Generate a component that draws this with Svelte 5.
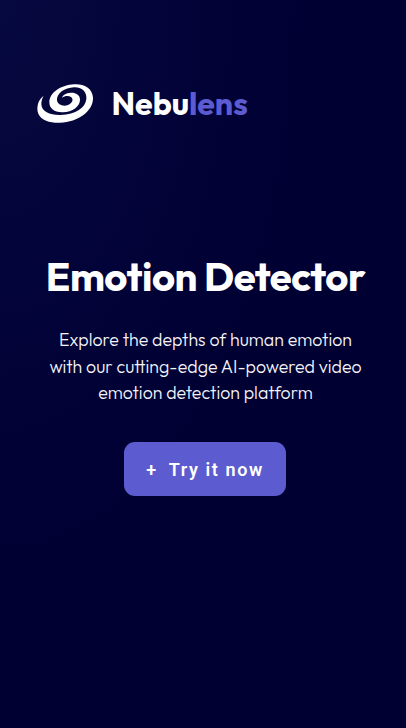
<script>
  const lines = [
    'Explore the depths of human emotion',
    'with our cutting-edge AI-powered video',
    'emotion detection platform',
  ];
</script>

<main>
  <header>
    <svg class="logo" viewBox="0 0 216 168" aria-hidden="true">
      <path fill="#fff" d="M41 62C24 74 18 98 25 116C34 137 62 144 90 143C145 141 190 108 189 68C187 38 160 26 132 28C95 30 58 52 58 82C58 101 74 113 98 112C128 111 150 94 150 74C150 58 136 52 122 53C108 54 98 60 96 68C104 62 116 61 123 66C132 73 127 85 114 90C100 95 83 90 81 76C79 56 104 38 132 37C158 36 171 52 169 72C166 99 138 118 92 120C60 121 35 110 34 88C34 78 37 69 41 62Z" />
    </svg>
    <div class="brand"><span>Nebu</span><span class="last">lens</span></div>
  </header>
  <section>
    <h1>Emotion Detector</h1>
    <p>
      {#each lines as line}
        <span>{line}</span>
      {/each}
    </p>
    <button><span class="plus">+</span>Try it now</button>
  </section>
</main>

<style>
  main {
    box-sizing: border-box;
    width: 100%;
    height: 728px;
    padding-top: 75px;
    overflow: hidden;
    color: #fff;
    background: radial-gradient(ellipse 300px 560px at 0 0, #06093f, #03043a 45%, #000033 100%);
    font-family: Outfit, Lato, sans-serif;
  }
  header { display: flex; align-items: center; height: 56px; padding-left: 30px; }
  .logo { width: 72px; height: 56px; flex: none; }
  .brand { margin-left: 9.5px; font-size: 32px; line-height: 40px; font-weight: 700; white-space: nowrap; }
  .last { color: #5d5bd0; }
  section { display: flex; flex-direction: column; align-items: center; padding: 120px 0 0 4px; }
  h1 { margin: 0 0 0 1px; font-size: 40px; line-height: 50px; font-weight: 700; letter-spacing: -0.48px; white-space: nowrap; }
  p { margin: 26px 0 0; padding-left: 1px; font-size: 17.75px; line-height: 26.5px; font-weight: 300; text-align: center; color: #f4f4fa; }
  p span { display: block; white-space: nowrap; }
  button {
    width: 162px;
    height: 54px;
    margin: 35.5px 0 0;
    padding: 0;
    border: 0;
    border-radius: 11px;
    color: #fff;
    background: #5d5bd0;
    font: 600 18px/55px Roboto, sans-serif;
    letter-spacing: 1.6px;
    white-space: nowrap;
  }
  .plus { margin-right: 11px; }
</style>
